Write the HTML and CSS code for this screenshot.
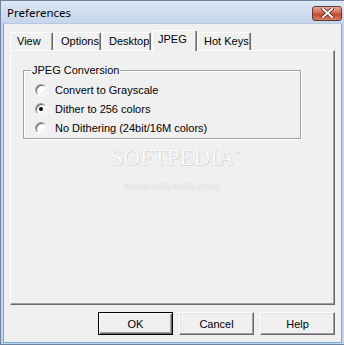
FILE: index.html
```html
<!DOCTYPE html>
<html lang="en">
<head>
    <meta charset="UTF-8">
    <title>Preferences</title>
    <link rel="stylesheet" href="styles.css">
</head>
<body>
    <div class="window">
        <div class="titlebar">
            <span class="title">Preferences</span>
            <button type="button" class="close">
                <svg width="13" height="10" viewBox="0 0 13 10">
                    <path d="M2 1 L11 9 M11 1 L2 9" stroke="#5a1a14" stroke-width="3.4" stroke-linecap="square"/>
                    <path d="M2 1 L11 9 M11 1 L2 9" stroke="#fff" stroke-width="2" stroke-linecap="square"/>
                </svg>
            </button>
        </div>
        <div class="client">
            <!-- Tabs -->
            <div class="tabs">
                <div class="tab t-view">View</div>
                <div class="tab t-options">Options</div>
                <div class="tab t-desktop">Desktop</div>
                <div class="tab t-jpeg active">JPEG</div>
                <div class="tab t-hotkeys">Hot Keys</div>
            </div>
            <div class="panel">
                <fieldset class="group">
                    <legend>JPEG Conversion</legend>
                    <label class="option"><span class="radio"></span>Convert to Grayscale</label>
                    <label class="option"><span class="radio checked"></span>Dither to 256 colors</label>
                    <label class="option"><span class="radio"></span>No Dithering (24bit/16M colors)</label>
                </fieldset>
                <div class="watermark">
                    <div class="wm-name">SOFTPEDIA<sup>™</sup></div>
                    <div class="wm-url">www.softpedia.com</div>
                </div>
            </div>
            <!-- Buttons -->
            <div class="buttons">
                <button type="button" class="btn default">OK</button>
                <button type="button" class="btn">Cancel</button>
                <button type="button" class="btn">Help</button>
            </div>
        </div>
    </div>
</body>
</html>
```

FILE: styles.css
```css
body {
    margin: 0;
    font-family: "Liberation Sans", Arial, sans-serif;
    font-size: 11px;
    color: #000;
}
.window {
    width: 344px;
    height: 345px;
    box-sizing: border-box;
    border: 1px solid #6f82a0;
    border-right: none;
    background: #c4d4ea;
    display: flex;
    flex-direction: column;
    padding: 0 2px 1px 2px;
}
.titlebar {
    height: 22px;
    display: flex;
    align-items: center;
    justify-content: space-between;
    background: linear-gradient(#dde7f4, #c5d5eb);
    margin: 0 -2px 0 -2px;
    padding: 0 2px 0 6px;
}
.title {
    font-family: "Noto Sans", "DejaVu Sans", sans-serif;
    font-size: 11.5px;
    margin-top: 1px;
}
.close {
    width: 30px;
    height: 15px;
    margin-top: 2px;
    border: 1px solid #5e3a3a;
    border-radius: 3px;
    background: linear-gradient(#e9a99a, #d16a55 45%, #c04a33 55%, #d97c63);
    display: flex;
    align-items: center;
    justify-content: center;
    padding: 0;
}
.client {
    flex: 1;
    background: #f0f0f0;
    border: 1px solid #6aaee3;
    border-top: 1px solid #b7c8e0;
    display: flex;
    flex-direction: column;
    padding: 6px 6px 5px 6px;
}
.tabs {
    display: flex;
    align-items: flex-end;
    height: 20px;
}
.tab {
    box-sizing: border-box;
    height: 18px;
    line-height: 16px;
    padding-left: 6px;
    border-top: 1px solid #fff;
    border-left: 1px solid #fff;
    border-right: 1px solid #696969;
    box-shadow: inset -1px 0 #a0a0a0;
    border-radius: 2px 2px 0 0;
    background: #f0f0f0;
    white-space: nowrap;
    margin-right: 1px;
}
.t-view { width: 43px; }
.t-options { width: 47px; }
.t-desktop { width: 49px; }
.t-jpeg { width: 45px; }
.t-hotkeys { width: 54px; }
.tab.active {
    position: relative;
    z-index: 1;
    height: 21px;
    margin-bottom: -1px;
    line-height: 17px;
    padding-left: 5px;
    margin-right: 0;
}
.panel {
    height: 255px;
    box-sizing: border-box;
    border-top: 1px solid #fff;
    border-left: 1px solid #fff;
    border-right: 1px solid #696969;
    border-bottom: 1px solid #696969;
    box-shadow: inset -1px -1px #a0a0a0;
    padding: 13px 0 0 12px;
    display: flex;
    flex-direction: column;
}
.group {
    width: 278px;
    height: 75px;
    box-sizing: border-box;
    margin: 0;
    padding: 6px 0 0 11px;
    border: 1px solid #a0a0a0;
    box-shadow: inset 1px 1px #fff, 1px 1px #fff;
    display: flex;
    flex-direction: column;
    gap: 6px;
}
.group legend {
    padding: 0 1px;
    margin-left: -4px;
    line-height: 13px;
}
.option {
    display: flex;
    align-items: center;
    gap: 8px;
    height: 13px;
    white-space: nowrap;
}
.radio {
    width: 12px;
    height: 12px;
    box-sizing: border-box;
    border-radius: 50%;
    border: 1px solid;
    border-color: #a0a0a0 #fff #fff #a0a0a0;
    box-shadow: inset 1px 1px #696969, inset -1px -1px #e3e3e3;
    background: #fff;
    display: flex;
    align-items: center;
    justify-content: center;
}
.radio.checked::after {
    content: "";
    width: 4px;
    height: 4px;
    border-radius: 50%;
    background: #000;
}
.watermark {
    margin: 6px 0 0 -12px;
    text-align: center;
}
.wm-name {
    font-family: "Liberation Serif", serif;
    font-size: 23px;
    color: #fbfbfb;
    text-shadow: 0 0 1px #c0c0c0, 1px 1px 0 #dcdcdc;
    padding-left: 6px;
}
.wm-name sup {
    font-family: "Liberation Sans", sans-serif;
    font-size: 6px;
    color: #d8d8d8;
    text-shadow: none;
}
.wm-url {
    margin-top: 9px;
    font-size: 11px;
    color: #f6f6f6;
    text-shadow: 0 0 1px #b8b8b8;
}
.buttons {
    display: flex;
    justify-content: flex-end;
    gap: 6px;
    margin-top: 7px;
}
.btn {
    width: 75px;
    height: 23px;
    box-sizing: border-box;
    font-family: "Liberation Sans", Arial, sans-serif;
    font-size: 11px;
    background: #f0f0f0;
    border: 1px solid;
    border-color: #fff #696969 #696969 #fff;
    box-shadow: inset -1px -1px #a0a0a0, inset 1px 1px #e3e3e3;
    padding: 0;
}
.btn.default {
    border: 1px solid #000;
    box-shadow: inset 1px 1px #fff, inset -1px -1px #696969, inset -2px -2px #a0a0a0;
}
```
